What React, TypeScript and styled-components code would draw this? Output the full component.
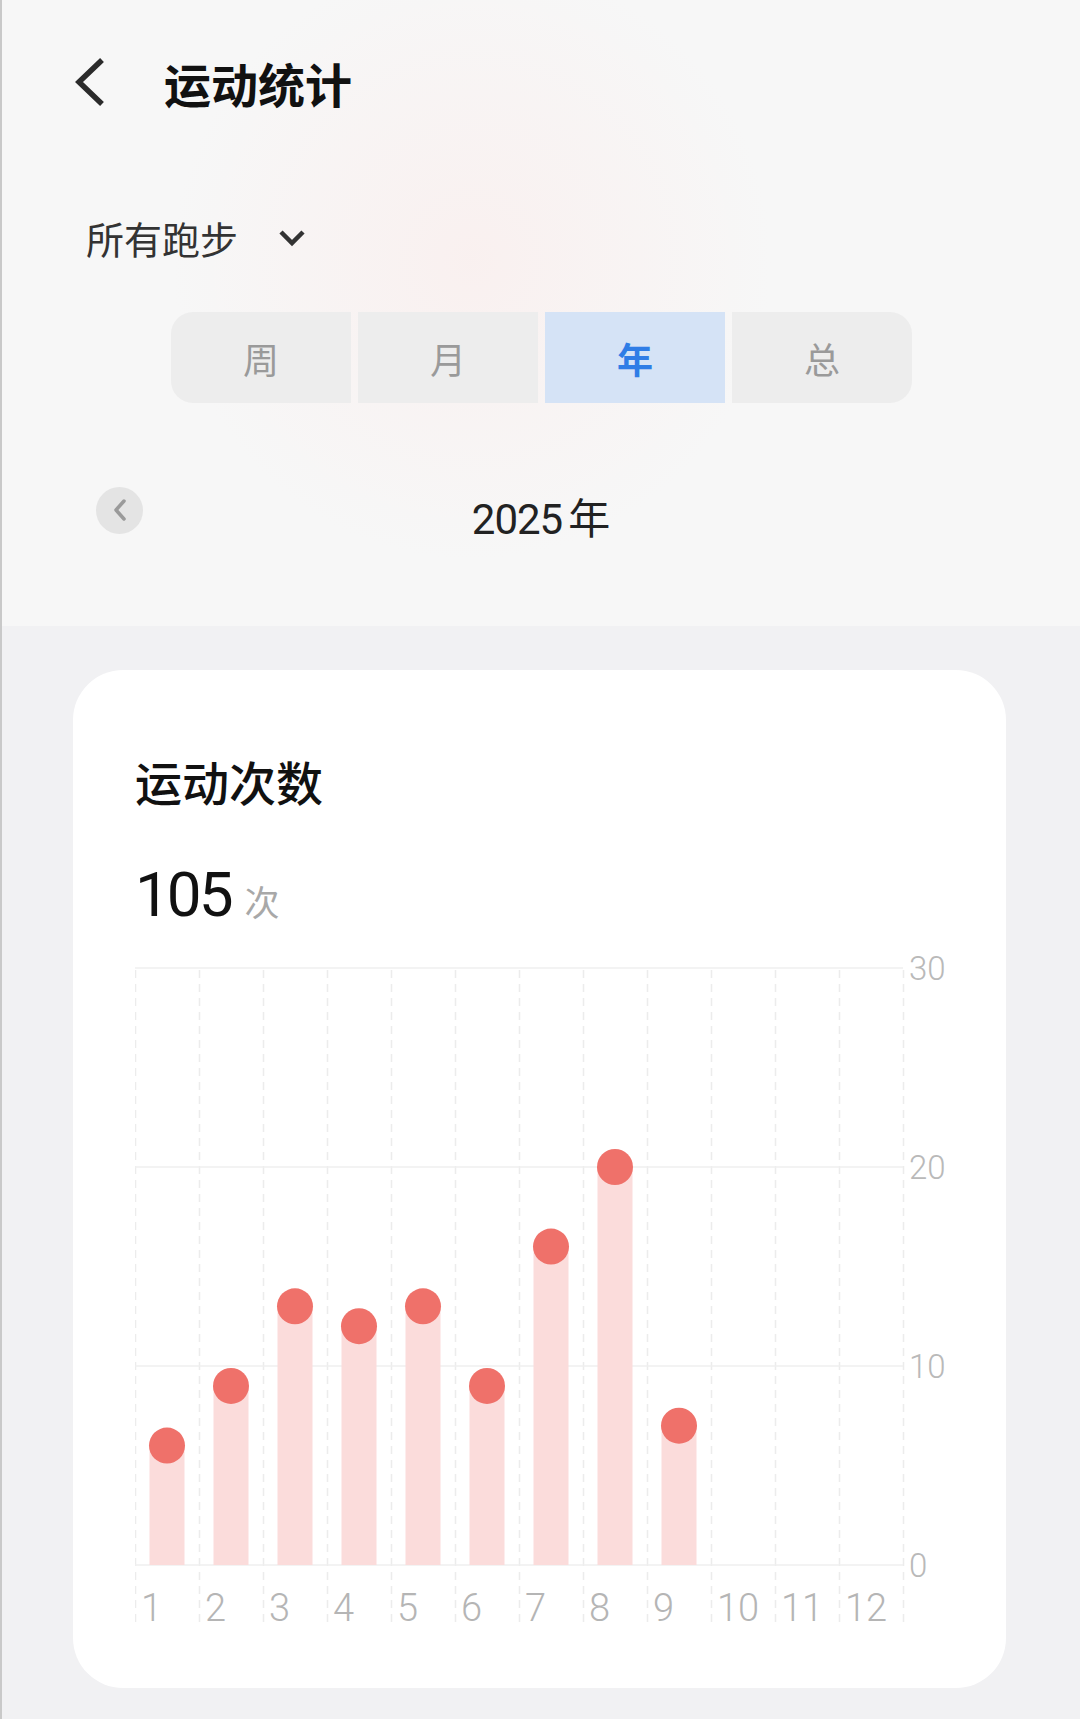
import React from 'react';
import styled, { createGlobalStyle } from 'styled-components';

const GlobalStyle = createGlobalStyle`
  html, body {
    margin: 0;
    padding: 0;
    background: #f1f1f3;
  }
  body {
    font-family: "Noto Sans CJK SC", "Noto Sans", sans-serif;
    color: #111;
  }
`;

const Page = styled.div`
  width: 1080px;
  min-height: 1719px;
  display: flex;
  flex-direction: column;
  background: #f1f1f3;
  border-left: 2px solid #c9c9c9;
  box-sizing: border-box;
`;

const Header = styled.div`
  display: flex;
  flex-direction: column;
  padding-bottom: 85px;
  background:
    radial-gradient(circle at 470px 260px, rgba(252, 232, 230, 0.45) 0, rgba(247, 247, 247, 0) 300px),
    #f7f7f7;
`;

const TopBar = styled.div`
  height: 164px;
  display: flex;
  align-items: center;
  padding-left: 71px;
  gap: 59px;
`;

const Title = styled.h1`
  margin: 0;
  font-size: 47px;
  line-height: 1;
  font-weight: 700;
  color: #111;
`;

const FilterRow = styled.div`
  margin-top: 55px;
  padding-left: 84px;
  display: flex;
  align-items: center;
  gap: 40px;
  font-size: 38px;
  line-height: 38px;
  color: #333;
`;

const Tabs = styled.div`
  margin: 55px 0 0 169px;
  width: 741px;
  height: 91px;
  display: flex;
  gap: 7px;
  border-radius: 22px;
  overflow: hidden;
`;

const Tab = styled.div<{ $active?: boolean }>`
  flex: 1;
  display: flex;
  align-items: center;
  justify-content: center;
  font-size: 36px;
  font-weight: ${p => (p.$active ? 700 : 400)};
  color: ${p => (p.$active ? '#2f7de6' : '#9a9a9a')};
  background: ${p => (p.$active ? '#d5e3f6' : '#ededed')};
`;

const YearRow = styled.div`
  margin-top: 76px;
  padding: 0 94px;
  display: grid;
  grid-template-columns: 1fr auto 1fr;
  align-items: center;
`;

const RoundButton = styled.div`
  width: 47px;
  height: 47px;
  border-radius: 50%;
  background: #e4e4e4;
  display: flex;
  align-items: center;
  justify-content: center;
`;

const YearText = styled.div`
  padding-top: 16px;
  font-size: 42px;
  line-height: 1;
  color: #222;
  display: flex;
  align-items: baseline;
  gap: 6px;
`;

const Digits = styled.span`
  font-family: Roboto, "Noto Sans", sans-serif;
  letter-spacing: -1px;
`;

const Card = styled.div`
  margin: 44px 0 0 71px;
  width: 933px;
  height: 1018px;
  box-sizing: border-box;
  background: #fff;
  border-radius: 50px;
  padding: 87px 0 0 62px;
  display: flex;
  flex-direction: column;
`;

const CardTitle = styled.div`
  font-size: 47px;
  line-height: 47px;
  font-weight: 500;
  color: #111;
`;

const ValueRow = styled.div`
  margin-top: 60px;
  display: flex;
  align-items: baseline;
  gap: 14px;
`;

const BigNumber = styled.span`
  font-family: Roboto, "Noto Sans", sans-serif;
  font-size: 62px;
  line-height: 62px;
  letter-spacing: -3px;
  color: #111;
`;

const Unit = styled.span`
  font-size: 35px;
  color: #a8a8a8;
`;

const ChartSvg = styled.svg`
  display: block;
  margin-top: 14px;
  font-family: Roboto, "Noto Sans", sans-serif;
`;

const months = [6, 9, 13, 12, 13, 9, 16, 20, 7, 0, 0, 0];
const COL = 64;
const BASE = 625;
const UNIT = 19.9;

function Chart() {
  return (
    <ChartSvg width={840} height={700} viewBox="0 0 840 700">
      {Array.from({ length: 13 }).map((_, i) => (
        <line
          key={'v' + i}
          x1={i * COL + 0.5}
          x2={i * COL + 0.5}
          y1={30}
          y2={688}
          stroke="#ececec"
          strokeWidth={1.5}
          strokeDasharray="8 6"
        />
      ))}
      {[30, 20, 10, 0].map(v => (
        <g key={'h' + v}>
          <line x1={0} x2={768} y1={BASE - v * UNIT} y2={BASE - v * UNIT} stroke="#efefef" strokeWidth={1.5} />
          <text x={774} y={BASE - v * UNIT} dominantBaseline="central" fontSize={33} fontWeight={300} fill="#b9b9b9">
            {v}
          </text>
        </g>
      ))}
      {months.map((m, i) =>
        m > 0 ? (
          <g key={'b' + i}>
            <rect x={i * COL + 14.5} y={BASE - m * UNIT} width={35} height={m * UNIT} fill="#fbdcdb" />
            <circle cx={i * COL + 32} cy={BASE - m * UNIT} r={18} fill="#ef716a" />
          </g>
        ) : null
      )}
      {months.map((_, i) => (
        <text key={'x' + i} x={i * COL + 6} y={681} fontSize={38} fontWeight={300} fill="#b5b5b5">
          {i + 1}
        </text>
      ))}
    </ChartSvg>
  );
}

const App: React.FC = () => {
  return <Page>
    <GlobalStyle />
    <Header>
      <TopBar>
        <svg width="32" height="48" viewBox="0 0 32 48">
          <polyline points="27,4 6,24 27,44" fill="none" stroke="#2b2b2b" strokeWidth="5.5" strokeLinecap="square" />
        </svg>
        <Title>运动统计</Title>
      </TopBar>
      <FilterRow>
        <span>所有跑步</span>
        <svg width="28" height="18" viewBox="0 0 28 18">
          <polyline points="3,3 14,14 25,3" fill="none" stroke="#333" strokeWidth="4.5" />
        </svg>
      </FilterRow>
      <Tabs>
        <Tab>周</Tab>
        <Tab>月</Tab>
        <Tab $active>年</Tab>
        <Tab>总</Tab>
      </Tabs>
      <YearRow>
        <RoundButton>
          <svg width="16" height="24" viewBox="0 0 16 24">
            <polyline points="12,3 4,12 12,21" fill="none" stroke="#9a9a9a" strokeWidth="3.5" strokeLinecap="round" strokeLinejoin="round" />
          </svg>
        </RoundButton>
        <YearText>
          <Digits>2025</Digits>
          <span>年</span>
        </YearText>
        <div />
      </YearRow>
    </Header>
    <Card>
      <CardTitle>运动次数</CardTitle>
      <ValueRow>
        <BigNumber>105</BigNumber>
        <Unit>次</Unit>
      </ValueRow>
      <Chart />
    </Card>
  </Page>;
};

export default App;
